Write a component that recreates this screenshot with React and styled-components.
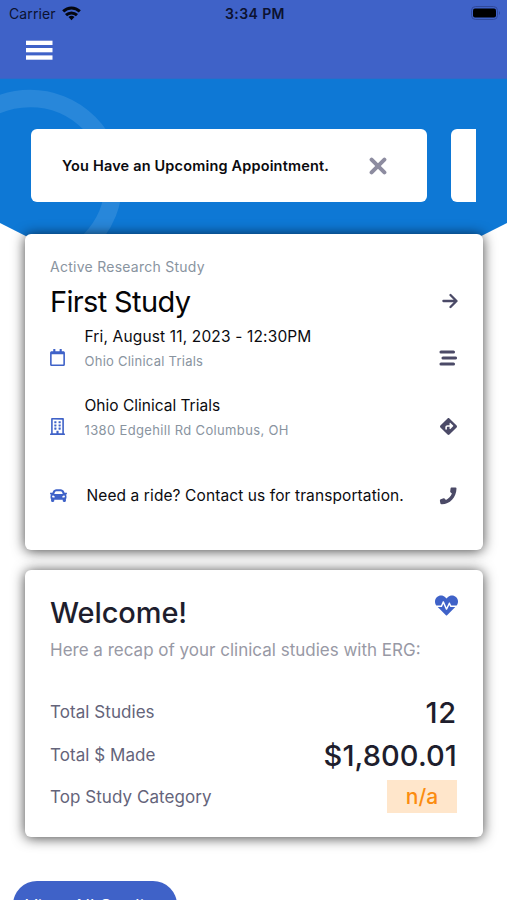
import React from 'react';
import styled, { createGlobalStyle } from 'styled-components';
import { FaRegCalendar, FaRegBuilding, FaCar, FaHeartbeat } from 'react-icons/fa';
import { FaDiamondTurnRight } from 'react-icons/fa6';

const GlobalStyle = createGlobalStyle`
  * { box-sizing: border-box; }
  body {
    margin: 0;
    background: #fff;
    color: #0b0b0f;
    font-family: Inter, "Liberation Sans", sans-serif;
  }
  h1, h2, p { margin: 0; font-weight: 400; }
  svg { display: block; }
  button { border: 0; padding: 0; background: none; font: inherit; color: inherit; }
`;

// --- LAYOUT ---
const Screen = styled.div`
  height: 900px;
  overflow: hidden;
`;
const Header = styled.header`
  height: 79px;
  background: #3f62c8;
  border-bottom: 1px solid #3268c9;
`;
const StatusBar = styled.div`
  display: grid;
  grid-template-columns: 1fr auto 1fr;
  align-items: center;
  height: 27px;
  padding: 0 6px 0 9px;
  color: #0c1230;
  font-size: 14px;
`;
const Carrier = styled.div`
  display: flex;
  align-items: center;
  gap: 6px;
  letter-spacing: 0.12px;
`;
const Clock = styled.div`
  font-weight: 600;
  letter-spacing: 0.4px;
`;
const Battery = styled.div`
  justify-self: end;
  padding-bottom: 1px;
`;
const MenuButton = styled.button`
  display: block;
  margin: 13px 0 0 26px;
`;
const Hero = styled.section`
  position: relative;
  height: 155px;
  padding: 50px 31px 0;
`;
const HeroShape = styled.svg`
  position: absolute;
  top: 0;
  left: 0;
  z-index: -1;
`;
const Notices = styled.div`
  display: flex;
  gap: 24px;
  overflow: hidden;
`;
const Notice = styled.div`
  display: flex;
  align-items: center;
  justify-content: space-between;
  flex: 0 0 396px;
  height: 73px;
  padding: 0 40px 0 31px;
  border-radius: 6px;
  background: #fff;
  font-size: 14.5px;
`;
const NoticeText = styled.p`
  font-weight: 600;
  white-space: nowrap;
  letter-spacing: 0.17px;
`;
const Card = styled.section`
  position: relative;
  z-index: ${(p) => p.$level};
  height: ${(p) => p.$height}px;
  margin: 0 24px 20px 25px;
  padding: 0 25px;
  border-radius: 6px;
  background: #fff;
  box-shadow: 0 1px 13px rgba(0, 0, 0, 0.74);
`;

// --- TEXTO ---
const Eyebrow = styled.p`
  padding-top: 23px;
  line-height: 20px;
  font-size: 14px;
  letter-spacing: 0.26px;
  color: #89949f;
`;
const TitleRow = styled.div`
  display: flex;
  align-items: center;
  justify-content: space-between;
  height: 46px;
  padding-top: 2px;
  color: #4b4a67;
`;
const Title = styled.h1`
  padding-top: 1px;
  font-size: 29px;
  line-height: 40px;
  letter-spacing: -0.65px;
  color: #050507;
`;
const DetailRow = styled.div`
  display: grid;
  grid-template-columns: ${(p) => p.$indent || 34.5}px 1fr auto;
  align-items: center;
  height: 69px;
`;
const DetailIcon = styled.div`
  margin-left: ${(p) => p.$shift || 0}px;
  color: #3f62c8;
`;
const DetailAction = styled.button`
  padding-right: 1px;
  color: #4b4a67;
`;
const DetailBody = styled.div`
  padding-bottom: 16px;
`;
const DetailText = styled.p`
  font-size: 15.5px;
  line-height: 24px;
  white-space: nowrap;
  letter-spacing: ${(p) => p.$spacing || 0}px;
`;
const DetailSub = styled.p`
  font-size: 13px;
  line-height: 25px;
  letter-spacing: ${(p) => p.$spacing}px;
  color: #89949f;
`;
const WelcomeRow = styled.div`
  display: flex;
  justify-content: space-between;
  padding-top: 23px;
  color: #3f62c8;
  svg { margin-top: 1px; }
`;
const Welcome = styled.h2`
  font-size: 29px;
  font-weight: 500;
  line-height: 40px;
  letter-spacing: -0.1px;
  color: #1e1e2d;
`;
const Recap = styled.p`
  height: 57px;
  padding-top: 5px;
  font-size: 17px;
  line-height: 24px;
  white-space: nowrap;
  color: #9899a5;
`;
const StatRow = styled.div`
  display: flex;
  align-items: center;
  justify-content: space-between;
  height: ${(p) => p.$height}px;
  font-size: 17px;
  letter-spacing: 0.06px;
  color: #64647a;
`;
const StatValue = styled.span`
  padding-right: 1px;
  font-size: 29px;
  font-weight: 500;
  letter-spacing: ${(p) => p.$spacing}px;
  color: #1e1e2d;
`;
const Tag = styled.span`
  width: 70px;
  height: 33px;
  margin-right: 1px;
  background: #ffe6cb;
  color: #fb8c10;
  font-size: 21px;
  font-weight: 500;
  line-height: 34px;
  text-align: center;
`;
const StudiesButton = styled.button`
  display: block;
  width: 164px;
  height: 48px;
  margin: 44px 0 0 13px;
  padding-top: 2px;
  border-radius: 24px;
  background: #3f62c8;
  color: #fff;
  font-size: 18px;
  letter-spacing: 0.2px;
  white-space: nowrap;
`;

// --- ÍCONES ---
const WifiIcon = () => (
  <svg width="19" height="15" viewBox="0 0 19 15" fill="none" stroke="#05070f" strokeWidth="3">
    <path d="M1.2 5.4C6 .9 13 .9 17.8 5.4" />
    <path d="M4 9.2c3.2-3 7.8-3 11 0" />
    <path d="M6.5 11Q9.5 8.6 12.5 11L9.5 14.2Z" fill="#05070f" stroke="none" />
  </svg>
);

const BatteryIcon = () => (
  <svg width="30" height="14" viewBox="0 0 30 14">
    <rect x="0.5" y="0.5" width="26" height="13" rx="4" fill="none" stroke="#30499b" />
    <rect x="2" y="2.5" width="23" height="9" rx="2" fill="#000" />
    <path d="M28 5v4q2-2 0-4" fill="#30499b" />
  </svg>
);

const MenuIcon = () => (
  <svg width="27" height="21" viewBox="0 0 27 21" fill="#fff">
    <rect y="0.7" width="26.5" height="4.3" />
    <rect y="8" width="26.5" height="4.3" />
    <rect y="15.4" width="26.5" height="4.3" />
  </svg>
);

const CloseIcon = () => (
  <svg width="18" height="18" viewBox="0 0 18 18" stroke="#8d8ca0" strokeWidth="4" strokeLinecap="round">
    <path d="M2.6 2.6l12.8 12.8M15.4 2.6L2.6 15.4" />
  </svg>
);

const ArrowIcon = () => (
  <svg width="16" height="16" viewBox="0 0 16 16" fill="none" stroke="currentColor" strokeWidth="2.3" strokeLinecap="round" strokeLinejoin="round">
    <path d="M1.4 8h13M8.5 2l6 6-6 6" />
  </svg>
);

const StaggeredIcon = () => (
  <svg width="18" height="16" viewBox="0 0 18 16" stroke="currentColor" strokeWidth="3.1" strokeLinecap="round">
    <path d="M2 2h12.500M4 8h12.500M2 14h12.500" />
  </svg>
);

const PhoneIcon = () => (
  <svg width="18" height="18" viewBox="0 0 18 18" fill="currentColor">
    <path d="M12.300.6 16.500.4Q17.500.5 17.500 1.500C17.300 10.600 10.700 17.200 3 17.300Q1.700 17.500 1.400 16.600L.9 13.700Q.8 12.700 1.700 12.300L4.600 11.300Q5.400 11.100 5.900 11.700L6.900 13.100C9.600 11.800 11.900 9.500 12.900 6.600L11.700 5.600Q11 5.100 11.200 4.300L11.600 1.300Q11.700.7 12.300.6Z" />
  </svg>
);

const App = () => (
  <>
    <GlobalStyle />
    <Screen>
      <Header>
        <StatusBar>
          <Carrier>Carrier <WifiIcon /></Carrier>
          <Clock>3:34 PM</Clock>
          <Battery><BatteryIcon /></Battery>
        </StatusBar>
        <MenuButton aria-label="Menu"><MenuIcon /></MenuButton>
      </Header>

      <Hero>
        <HeroShape width="507" height="158" viewBox="0 0 507 158">
          <defs>
            <clipPath id="hero-edge"><path d="M0 0H507V144L253.5 272L0 144Z" /></clipPath>
          </defs>
          <g clipPath="url(#hero-edge)">
            <rect width="507" height="158" fill="#0e78d5" />
            <circle cx="30" cy="103" r="83.6" fill="none" stroke="#2887da" strokeWidth="17.5" />
          </g>
        </HeroShape>
        <Notices>
          <Notice>
            <NoticeText>You Have an Upcoming Appointment.</NoticeText>
            <button aria-label="Close"><CloseIcon /></button>
          </Notice>
          <Notice />
        </Notices>
      </Hero>

      <Card $height={316} $level={2}>
        <Eyebrow>Active Research Study</Eyebrow>
        <TitleRow>
          <Title>First Study</Title>
          <ArrowIcon />
        </TitleRow>
        <DetailRow>
          <DetailIcon $shift={-1}><FaRegCalendar size={17} /></DetailIcon>
          <DetailBody>
            <DetailText $spacing={0.15}>Fri, August 11, 2023 - 12:30PM</DetailText>
            <DetailSub $spacing={0.25}>Ohio Clinical Trials</DetailSub>
          </DetailBody>
          <DetailAction><StaggeredIcon /></DetailAction>
        </DetailRow>
        <DetailRow>
          <DetailIcon $shift={-1}><FaRegBuilding size={17} /></DetailIcon>
          <DetailBody>
            <DetailText>Ohio Clinical Trials</DetailText>
            <DetailSub $spacing={0.35}>1380 Edgehill Rd Columbus, OH</DetailSub>
          </DetailBody>
          <DetailAction><FaDiamondTurnRight size={17} /></DetailAction>
        </DetailRow>
        <DetailRow $indent={36.5}>
          <DetailIcon><FaCar size={17} /></DetailIcon>
          <DetailText $spacing={0.1}>Need a ride? Contact us for transportation.</DetailText>
          <DetailAction><PhoneIcon /></DetailAction>
        </DetailRow>
      </Card>

      <Card $height={267} $level={1}>
        <WelcomeRow>
          <Welcome>Welcome!</Welcome>
          <FaHeartbeat size={23} />
        </WelcomeRow>
        <Recap>Here a recap of your clinical studies with ERG:</Recap>
        <StatRow $height={44}>
          Total Studies
          <StatValue $spacing={0.8}>12</StatValue>
        </StatRow>
        <StatRow $height={42}>
          Total $ Made
          <StatValue $spacing={0.1}>$1,800.01</StatValue>
        </StatRow>
        <StatRow $height={41}>
          Top Study Category
          <Tag>n/a</Tag>
        </StatRow>
      </Card>

      <StudiesButton>View All Studies</StudiesButton>
    </Screen>
  </>
);

export default App;
